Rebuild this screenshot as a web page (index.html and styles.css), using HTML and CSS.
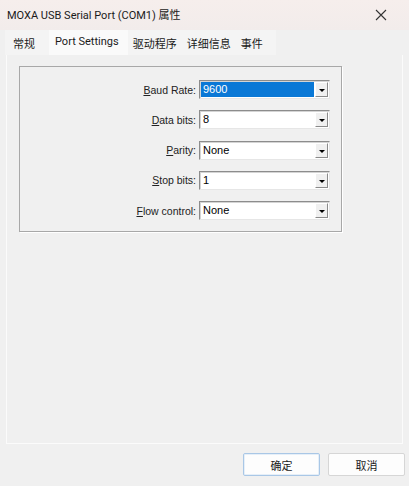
FILE: index.html
```html
<!DOCTYPE html>
<html lang="zh-CN">
<head>
    <meta charset="UTF-8">
    <title>MOXA USB Serial Port (COM1) 属性</title>
    <link rel="stylesheet" href="styles.css">
</head>
<body>
    <div class="dialog">
        <div class="titlebar">
            <span class="title">MOXA USB Serial Port (COM1) 属性</span>
            <svg class="close" width="12" height="12" viewBox="0 0 12 12">
                <path d="M1 1 L11 11 M11 1 L1 11" stroke="#333" stroke-width="1.1" fill="none"/>
            </svg>
        </div>

        <div class="tabs">
            <span class="tab tab-first">常规</span>
            <span class="tab tab-active">Port Settings</span>
            <span class="tab">驱动程序</span>
            <span class="tab">详细信息</span>
            <span class="tab tab-last">事件</span>
        </div>

        <div class="page">
            <div class="group">
                <div class="row">
                    <label class="label"><u>B</u>aud Rate:</label>
                    <div class="combo">
                        <span class="value value-selected">9600</span>
                        <span class="arrow"></span>
                    </div>
                </div>
                <div class="row">
                    <label class="label"><u>D</u>ata bits:</label>
                    <div class="combo">
                        <span class="value">8</span>
                        <span class="arrow"></span>
                    </div>
                </div>
                <div class="row">
                    <label class="label"><u>P</u>arity:</label>
                    <div class="combo">
                        <span class="value">None</span>
                        <span class="arrow"></span>
                    </div>
                </div>
                <div class="row">
                    <label class="label"><u>S</u>top bits:</label>
                    <div class="combo">
                        <span class="value">1</span>
                        <span class="arrow"></span>
                    </div>
                </div>
                <div class="row">
                    <label class="label"><u>F</u>low control:</label>
                    <div class="combo">
                        <span class="value">None</span>
                        <span class="arrow"></span>
                    </div>
                </div>
            </div>
        </div>

        <div class="footer">
            <button class="btn btn-default">确定</button>
            <button class="btn">取消</button>
        </div>
    </div>
</body>
</html>
```

FILE: styles.css
```css
body {
    margin: 0;
    background-color: #f0f0f0;
    font-family: Roboto, 'Noto Sans CJK SC', sans-serif;
}

.dialog {
    width: 409px;
    height: 486px;
    display: flex;
    flex-direction: column;
    background-color: #f0f0f0;
}

.titlebar {
    height: 30px;
    display: flex;
    align-items: center;
    justify-content: space-between;
    padding: 0 22px 0 7px;
    background: linear-gradient(to bottom, #f6eeec, #f2eceb);
    box-sizing: border-box;
}

.title {
    font-size: 11px;
    color: #1a1a1a;
    margin-top: -2px;
    white-space: nowrap;
}

.close {
    margin-top: -1px;
}

.tabs {
    height: 25px;
    display: flex;
    align-items: flex-end;
    align-self: flex-start;
    margin-left: 5px;
    background-color: #f4f4f4;
    font-size: 11px;
    color: #1a1a1a;
    white-space: nowrap;
}

.tab {
    flex-shrink: 0;
    padding: 0 5px 0 5px;
    line-height: 20px;
}

.tab-first {
    padding-left: 8px;
    padding-right: 14px;
}

.tab-last {
    padding-right: 13px;
}

.tab-active {
    background-color: #fafafa;
    padding: 2px 9px 0 6px;
    height: 25px;
    box-sizing: border-box;
    line-height: 20px;
}

.page {
    margin-left: 6px;
    width: 397px;
    height: 389px;
    box-sizing: border-box;
    border: 1px solid #fbfbfb;
    border-top: none;
    background-color: #f0f0f0;
    padding: 11px 0 0 12px;
}

.group {
    width: 323px;
    height: 166px;
    box-sizing: border-box;
    border: 1px solid #a8a8a8;
    box-shadow: 1px 1px 0 #ffffff;
    padding: 13px 0 0 0;
    display: flex;
    flex-direction: column;
    gap: 11.3px;
}

.row {
    display: grid;
    grid-template-columns: 176px 131px;
    column-gap: 3px;
    align-items: center;
    height: 19px;
}

.label {
    text-align: right;
    font-family: 'Liberation Sans', Arial, sans-serif;
    font-size: 10.5px;
    color: #222;
}

.combo {
    height: 19px;
    box-sizing: border-box;
    border: 1px solid #8c8c8c;
    border-right-color: #e6e6e6;
    border-bottom-color: #e6e6e6;
    background-color: #fff;
    display: flex;
    align-items: stretch;
    padding: 1px;
    box-shadow: inset 1px 1px 0 #d4d4d4;
}

.value {
    flex: 1;
    font-family: 'Liberation Sans', Arial, sans-serif;
    font-size: 11px;
    line-height: 15px;
    padding-left: 2px;
    color: #000;
}

.value-selected {
    background-color: #0a78d6;
    color: #fff;
    margin-right: 1px;
}

.arrow {
    width: 13px;
    box-sizing: border-box;
    background-color: #f0f0f0;
    border: 1px solid;
    border-color: #ffffff #8a8a8a #8a8a8a #ffffff;
    position: relative;
}

.arrow::after {
    content: '';
    position: absolute;
    left: 3px;
    top: 6px;
    border-left: 3px solid transparent;
    border-right: 3px solid transparent;
    border-top: 3px solid #000;
}

.footer {
    flex: 1;
    display: flex;
    justify-content: flex-end;
    align-items: flex-start;
    gap: 8px;
    padding: 9px 4px 0 0;
}

.btn {
    width: 77px;
    height: 23px;
    font-family: 'Noto Sans CJK SC', sans-serif;
    font-size: 11px;
    color: #1a1a1a;
    background-color: #fdfdfd;
    border: 1px solid #d6d6d6;
    border-radius: 2px;
    padding: 0;
}

.btn-default {
    border-color: #a9c7e6;
    box-shadow: inset 0 0 0 1px #e6eff8;
}
```
